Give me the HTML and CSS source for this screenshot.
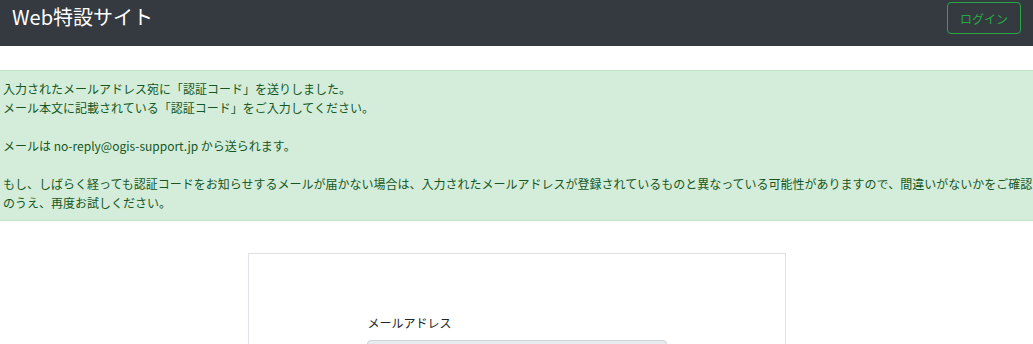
FILE: index.html
```html
<!DOCTYPE html>
<html lang="ja">
  <head>
    <meta charset="UTF-8" />
    <meta name="viewport" content="width=device-width, initial-scale=1.0" />
    <title>Web特設サイト</title>
    <link rel="stylesheet" href="styles.css">
  </head>
  <body>
    <header class="navbar">
      <div class="brand">Web特設サイト</div>
      <button class="btn-login">ログイン</button>
    </header>

    <div class="alert">
      <p>入力されたメールアドレス宛に「認証コード」を送りしました。<br>メール本文に記載されている「認証コード」をご入力してください。</p>
      <p>メールは no-reply@ogis-support.jp から送られます。</p>
      <p>もし、しばらく経っても認証コードをお知らせするメールが届かない場合は、入力されたメールアドレスが登録されているものと異なっている可能性がありますので、間違いがないかをご確認のうえ、再度お試しください。</p>
    </div>

    <div class="card">
      <form class="form">
        <label for="email">メールアドレス</label>
        <input type="text" id="email" disabled />
      </form>
    </div>
  </body>
</html>
```

FILE: styles.css
```css
html,
body {
  overflow: hidden;
}

body {
  margin: 0;
  font-family: "Noto Sans CJK JP", "Noto Sans", sans-serif;
  font-size: 12px;
  line-height: 19px;
  color: #212529;
  background: #fff;
}

.navbar {
  height: 46px;
  background: #343a40;
  display: flex;
  justify-content: space-between;
  align-items: flex-start;
  padding: 0 12px;
  box-sizing: border-box;
}

.brand {
  color: #fff;
  font-size: 20px;
  line-height: 30px;
  padding-top: 2px;
}

.btn-login {
  margin-top: 2px;
  height: 32px;
  width: 74px;
  background: transparent;
  border: 1px solid #28a745;
  border-radius: 4px;
  color: #28a745;
  font-family: inherit;
  font-size: 12px;
  padding: 0;
}

.alert {
  margin: 24px -8px 32px 0;
  padding: 8px 0 8px 3px;
  background: #d4edda;
  border-top: 1px solid #c3e6cb;
  border-bottom: 1px solid #c3e6cb;
  color: #155724;
}

.alert p {
  margin: 0 0 19px;
}

.alert p:last-child {
  margin-bottom: 0;
}

.card {
  width: 538px;
  height: 200px;
  margin: 0 auto;
  border: 1px solid #dee2e6;
  box-sizing: border-box;
  display: flex;
  justify-content: center;
}

.form {
  width: 300px;
  padding-top: 59px;
  display: flex;
  flex-direction: column;
}

.form label {
  padding-left: 1px;
  margin-bottom: 8px;
}

.form input {
  height: 32px;
  background: #e9ecef;
  border: 1px solid #ced4da;
  border-radius: 4px;
  box-sizing: border-box;
}
```
